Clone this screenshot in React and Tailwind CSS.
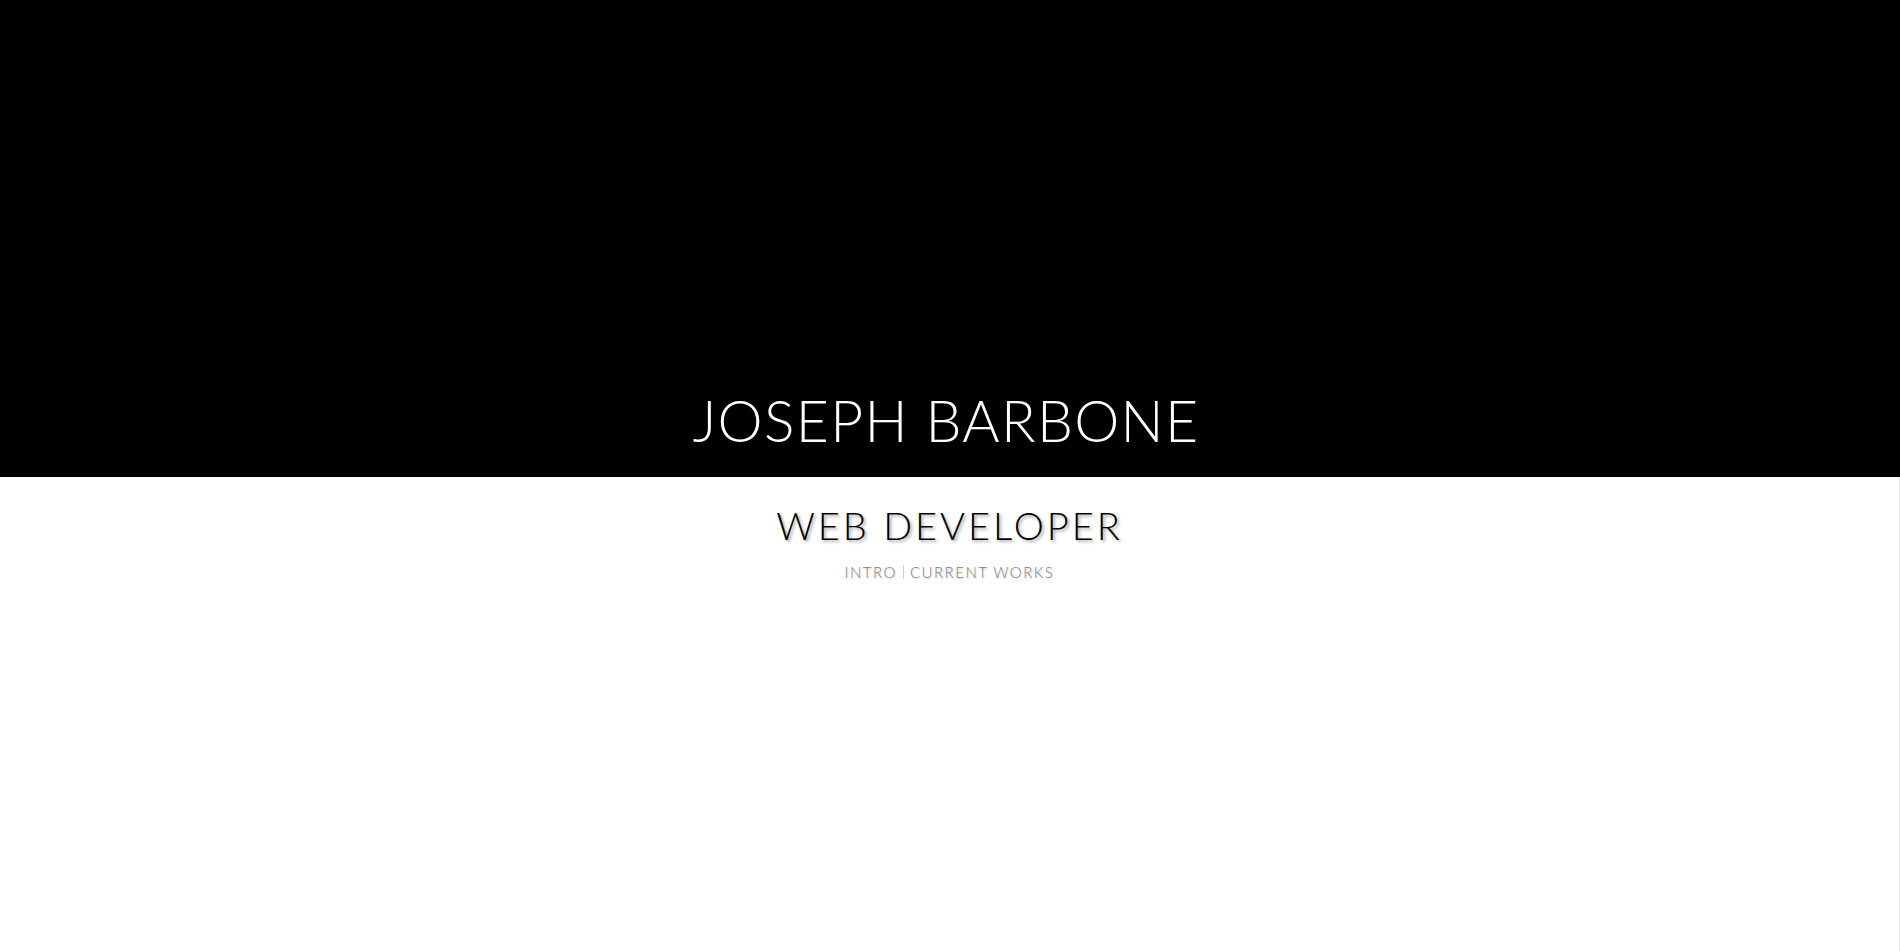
import React from 'react';

const App = () => {
  return (
    <div className="w-full min-h-[951px] bg-white font-['Lato','Liberation_Sans',sans-serif]">
      {/* Hero */}
      <header className="h-[477px] bg-black flex items-end justify-center pb-[28px]">
        <h1 className="text-white text-[57px] font-light tracking-[1.3px] leading-[57px] pr-[8px]">
          JOSEPH BARBONE
        </h1>
      </header>

      <section className="min-h-[474px] border-r border-[#e3e3e3] flex flex-col items-center pt-[26px]">
        <h2 className="text-black text-[38px] font-light tracking-[3px] leading-[44px] [text-shadow:2px_2px_3px_rgba(0,0,0,0.35)]">
          WEB DEVELOPER
        </h2>
        <nav className="mt-[14px] flex items-center text-[15px] text-[#808080] tracking-[1.5px] font-light [text-shadow:1px_1px_2px_rgba(0,0,0,0.2)]">
          <a href="#intro" className="pr-[6px]">INTRO</a>
          <span className="h-[14px] border-l border-[#d0d0d0]"></span>
          <a href="#works" className="pl-[6px]">CURRENT WORKS</a>
        </nav>
      </section>
    </div>
  );
};

export default App;
